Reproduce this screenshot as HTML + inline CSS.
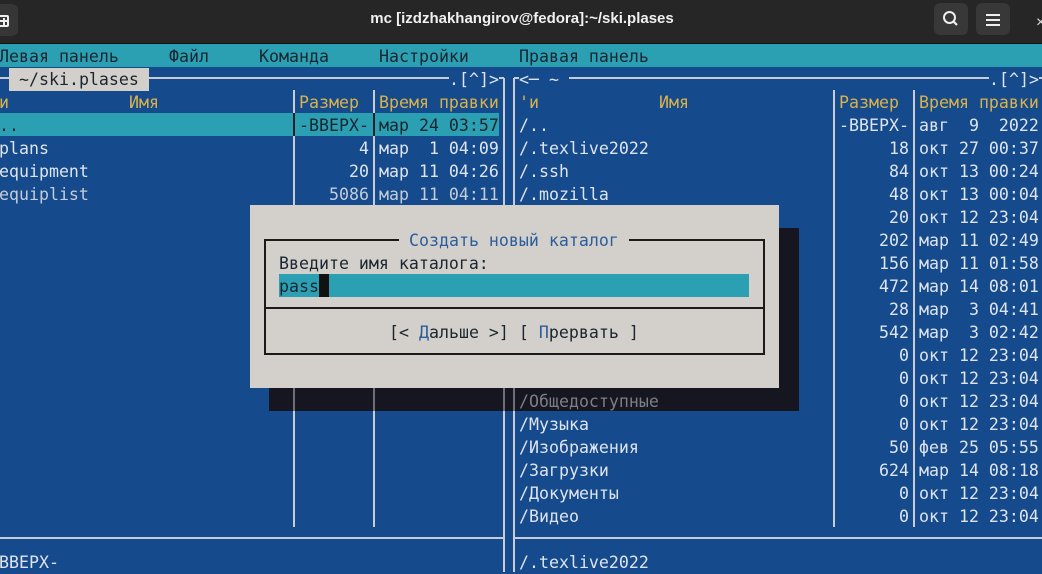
<!DOCTYPE html>
<html><head><meta charset="utf-8"><style>
*{margin:0;padding:0;box-sizing:border-box}
body{width:1042px;height:572px;overflow:hidden;background:#154a8c;position:relative;font-family:"DejaVu Sans Mono","Liberation Mono",monospace;font-size:16.6px}
.t{position:absolute;white-space:pre;line-height:23px;height:23px;color:#dfe4ec;transform:translateY(1px)}
.y{color:#d9b24c}
.d{color:#1b2530}
.g{color:#7d7f87}
.v{position:absolute;width:2px;background:#c9cdd3}
.h{position:absolute;height:2px;background:#c9cdd3}
</style></head><body>
<!-- title bar -->
<div style="position:absolute;left:0;top:0;width:1042px;height:44px;background:#262626;border-bottom:1px solid #111"></div>
<div style="position:absolute;left:-14px;top:4px;width:32px;height:32px;background:#363636;border-radius:6px"></div>
<div style="position:absolute;left:-3px;top:15px;width:12px;height:12px;border:2px solid #eee;border-radius:2px"></div>
<div style="position:absolute;left:0;top:20px;width:7px;height:2px;background:#eee"></div>
<div style="position:absolute;left:2.5px;top:17.5px;width:2px;height:7px;background:#eee"></div>
<div style="position:absolute;left:0;top:9px;width:1042px;text-align:center;font-family:'Liberation Sans',sans-serif;font-size:15px;font-weight:bold;color:#f0f0f0;line-height:20px;padding-left:2px">mc [izdzhakhangirov@fedora]:~/ski.plases</div>
<div style="position:absolute;left:934px;top:3px;width:34px;height:32px;background:#383838;border-radius:6px"></div>
<svg style="position:absolute;left:934px;top:3px" width="34" height="32"><circle cx="15.5" cy="14.5" r="5.5" fill="none" stroke="#eee" stroke-width="2"/><line x1="19.5" y1="18.5" x2="23" y2="22" stroke="#eee" stroke-width="2.2"/></svg>
<div style="position:absolute;left:976px;top:3px;width:34px;height:32px;background:#383838;border-radius:6px"></div>
<svg style="position:absolute;left:976px;top:3px" width="34" height="32"><rect x="10" y="11" width="14" height="2" fill="#eee"/><rect x="10" y="16" width="14" height="2" fill="#eee"/><rect x="10" y="21" width="14" height="2" fill="#eee"/></svg>
<div style="position:absolute;left:1036px;top:14px;color:#ddd;font-family:'Liberation Sans',sans-serif;font-size:16px">×</div>
<!-- menu bar -->
<div style="position:absolute;left:0;top:44px;width:1042px;height:23px;background:#2aa0b2"></div>
<div class="t d" style="left:-1px;top:44px">Левая панель</div>
<div class="t d" style="left:169px;top:44px">Файл</div>
<div class="t d" style="left:259px;top:44px">Команда</div>
<div class="t d" style="left:379px;top:44px">Настройки</div>
<div class="t d" style="left:519px;top:44px">Правая панель</div>
<!-- borders -->
<div class="h" style="left:0;top:77px;width:504px"></div>
<div class="h" style="left:514px;top:77px;width:528px"></div>
<div class="v" style="left:503px;top:78px;height:494px"></div>
<div class="v" style="left:513px;top:78px;height:494px"></div>
<div class="h" style="left:0;top:537px;width:504px"></div>
<div class="h" style="left:514px;top:537px;width:528px"></div>
<div class="v" style="left:293px;top:90px;height:437px"></div>
<div class="v" style="left:373px;top:90px;height:437px"></div>
<div class="v" style="left:833px;top:90px;height:437px"></div>
<div class="v" style="left:913px;top:90px;height:437px"></div>
<div class="t d" style="left:9px;top:67px;background:#d3d0cb;padding:0 10px">~/ski.plases</div>
<div class="t" style="left:449px;top:67px;background:#154a8c">.[^]></div>
<div class="t" style="left:519px;top:67px;background:#154a8c">&lt;─ ~ </div>
<div class="t" style="left:989px;top:67px;background:#154a8c">.[^]></div>
<!-- left panel -->
<div class="t y" style="left:-1px;top:90px">и</div>
<div class="t y" style="left:129px;top:90px">Имя</div>
<div class="t y" style="left:299px;top:90px">Размер</div>
<div class="t y" style="left:379px;top:90px">Время правки</div>
<div style="position:absolute;left:0;top:113px;width:499px;height:23px;background:#2aa0b2"></div>
<div style="position:absolute;left:293px;top:113px;width:2px;height:23px;background:#14202c"></div>
<div style="position:absolute;left:373px;top:113px;width:2px;height:23px;background:#14202c"></div>
<div class="t d" style="left:-1px;top:113px">..</div>
<div class="t d" style="left:299px;top:113px">-ВВЕРХ-</div>
<div class="t d" style="left:379px;top:113px">мар 24 03:57</div>
<div class="t" style="left:-1px;top:136px">plans</div>
<div class="t" style="left:359px;top:136px">4</div>
<div class="t" style="left:379px;top:136px">мар  1 04:09</div>
<div class="t" style="left:-1px;top:159px">equipment</div>
<div class="t" style="left:349px;top:159px">20</div>
<div class="t" style="left:379px;top:159px">мар 11 04:26</div>
<div class="t" style="left:-1px;top:182px;color:#c5ccd6">equiplist</div>
<div class="t" style="left:329px;top:182px;color:#c5ccd6">5086</div>
<div class="t" style="left:379px;top:182px;color:#c5ccd6">мар 11 04:11</div>
<div class="t" style="left:-1px;top:550px">ВВЕРХ-</div>
<!-- right panel -->
<div class="t y" style="left:519px;top:90px">'и</div>
<div class="t y" style="left:659px;top:90px">Имя</div>
<div class="t y" style="left:839px;top:90px">Размер</div>
<div class="t y" style="left:919px;top:90px">Время правки</div>
<div class="t" style="left:519px;top:113px">/..</div><div class="t" style="left:839px;top:113px">-ВВЕРХ-</div><div class="t" style="left:919px;top:113px">авг  9  2022</div>
<div class="t" style="left:519px;top:136px">/.texlive2022</div><div class="t" style="left:889px;top:136px">18</div><div class="t" style="left:919px;top:136px">окт 27 00:37</div>
<div class="t" style="left:519px;top:159px">/.ssh</div><div class="t" style="left:889px;top:159px">84</div><div class="t" style="left:919px;top:159px">окт 13 00:24</div>
<div class="t" style="left:519px;top:182px">/.mozilla</div><div class="t" style="left:889px;top:182px">48</div><div class="t" style="left:919px;top:182px">окт 13 00:04</div>
<div class="t" style="left:889px;top:205px">20</div><div class="t" style="left:919px;top:205px">окт 12 23:04</div>
<div class="t" style="left:879px;top:228px">202</div><div class="t" style="left:919px;top:228px">мар 11 02:49</div>
<div class="t" style="left:879px;top:251px">156</div><div class="t" style="left:919px;top:251px">мар 11 01:58</div>
<div class="t" style="left:879px;top:274px">472</div><div class="t" style="left:919px;top:274px">мар 14 08:01</div>
<div class="t" style="left:889px;top:297px">28</div><div class="t" style="left:919px;top:297px">мар  3 04:41</div>
<div class="t" style="left:879px;top:320px">542</div><div class="t" style="left:919px;top:320px">мар  3 02:42</div>
<div class="t" style="left:899px;top:343px">0</div><div class="t" style="left:919px;top:343px">окт 12 23:04</div>
<div class="t" style="left:899px;top:366px">0</div><div class="t" style="left:919px;top:366px">окт 12 23:04</div>
<div class="t" style="left:899px;top:389px">0</div><div class="t" style="left:919px;top:389px">окт 12 23:04</div>
<div class="t" style="left:519px;top:412px">/Музыка</div><div class="t" style="left:899px;top:412px">0</div><div class="t" style="left:919px;top:412px">окт 12 23:04</div>
<div class="t" style="left:519px;top:435px">/Изображения</div><div class="t" style="left:889px;top:435px">50</div><div class="t" style="left:919px;top:435px">фев 25 05:55</div>
<div class="t" style="left:519px;top:458px">/Загрузки</div><div class="t" style="left:879px;top:458px">624</div><div class="t" style="left:919px;top:458px">мар 14 08:18</div>
<div class="t" style="left:519px;top:481px">/Документы</div><div class="t" style="left:899px;top:481px">0</div><div class="t" style="left:919px;top:481px">окт 12 23:04</div>
<div class="t" style="left:519px;top:504px">/Видео</div><div class="t" style="left:899px;top:504px">0</div><div class="t" style="left:919px;top:504px">окт 12 23:04</div>
<div class="t" style="left:519px;top:550px">/.texlive2022</div>
<!-- shadow -->
<div style="position:absolute;left:269px;top:228px;width:530px;height:183px;background:#15161f"></div>
<div class="v" style="left:293px;top:388px;height:23px;background:#6d7078"></div>
<div class="v" style="left:373px;top:388px;height:23px;background:#6d7078"></div>
<div class="v" style="left:503px;top:388px;height:23px;background:#6d7078"></div>
<div class="v" style="left:513px;top:388px;height:23px;background:#6d7078"></div>
<div class="t g" style="left:519px;top:389px">/Общедоступные</div>
<!-- dialog -->
<div style="position:absolute;left:250px;top:205px;width:529px;height:183px;background:#d3d0cb"></div>
<div style="position:absolute;left:264px;top:239px;width:501px;height:116px;border:2px solid #1a1a1a"></div>
<div style="position:absolute;left:264px;top:307px;width:501px;height:2px;background:#1a1a1a"></div>
<div class="t" style="left:399px;top:228px;background:#d3d0cb;color:#2c5d9c;padding:0 10px">Создать новый каталог</div>
<div class="t d" style="left:279px;top:251px">Введите имя каталога:</div>
<div style="position:absolute;left:279px;top:274px;width:470px;height:23px;background:#2aa0b2"></div>
<div class="t d" style="left:279px;top:274px">pass</div>
<div style="position:absolute;left:319px;top:274px;width:10px;height:23px;background:#111"></div>
<div class="t d" style="left:389px;top:320px">[&lt; <span style="color:#2c5d9c">Д</span>альше &gt;] [ <span style="color:#2c5d9c">П</span>рервать ]</div>
</body></html>
